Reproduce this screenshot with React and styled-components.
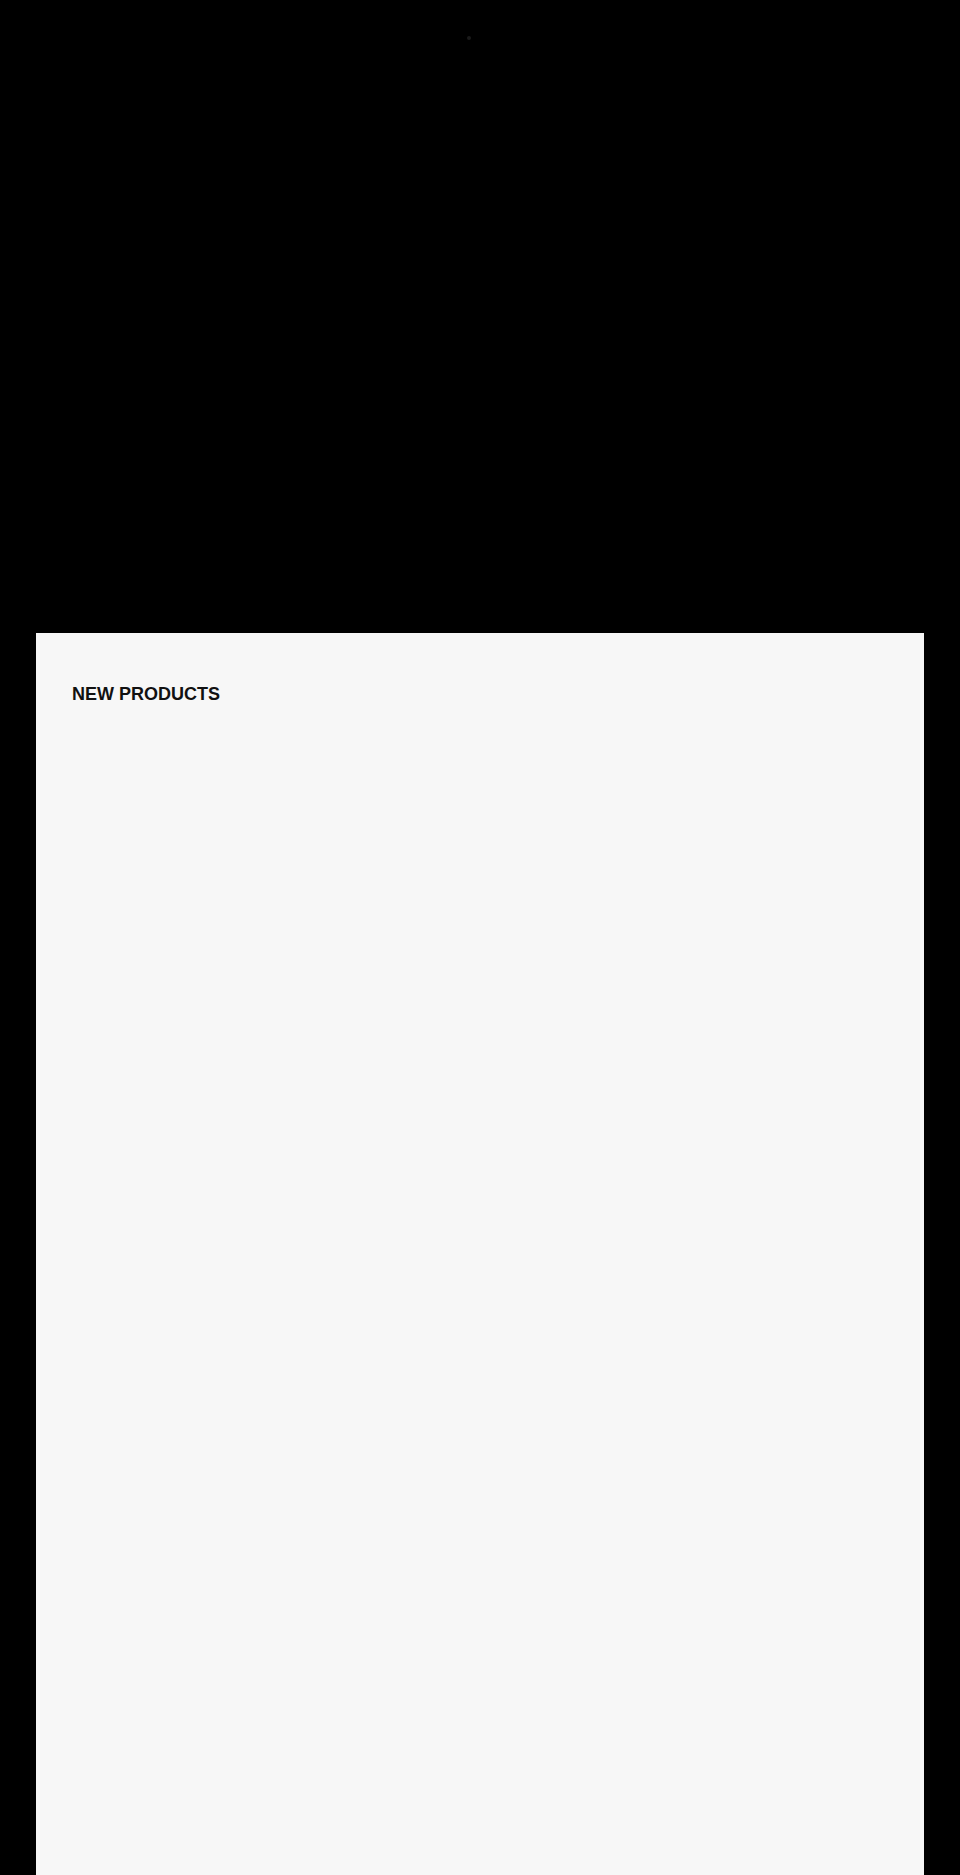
import React from "react";
import styled, { createGlobalStyle } from "styled-components";

const Global = createGlobalStyle`
  html, body { margin: 0; padding: 0; background: #000; }
  body { font-family: "Liberation Sans", Arial, sans-serif; }
`;

const Page = styled.div`
  background: #000;
  min-height: 1875px;
  display: flex;
  flex-direction: column;
`;

const Hero = styled.header`
  height: 633px;
  display: flex;
  justify-content: center;
  align-items: flex-start;
  padding-top: 36px;
  box-sizing: border-box;
`;

const Spinner = styled.span`
  width: 4px;
  height: 4px;
  border-radius: 50%;
  background: #1a1a1a;
  margin-right: 22px;
`;

const Panel = styled.main`
  margin: 0 36px;
  background: #f7f7f7;
  flex: 1;
  min-height: 1242px;
  padding: 50px 36px;
  box-sizing: border-box;
`;

const Heading = styled.h2`
  margin: 0;
  font-family: "Liberation Sans", Arial, sans-serif;
  font-size: 18px;
  font-weight: 700;
  line-height: 22px;
  color: #111;
  letter-spacing: 0;
`;

export default function App() {
  return (
    <>
      <Global />
      <Page>
        <Hero>
          <Spinner />
        </Hero>
        <Panel>
          <Heading>NEW PRODUCTS</Heading>
        </Panel>
      </Page>
    </>
  );
}
